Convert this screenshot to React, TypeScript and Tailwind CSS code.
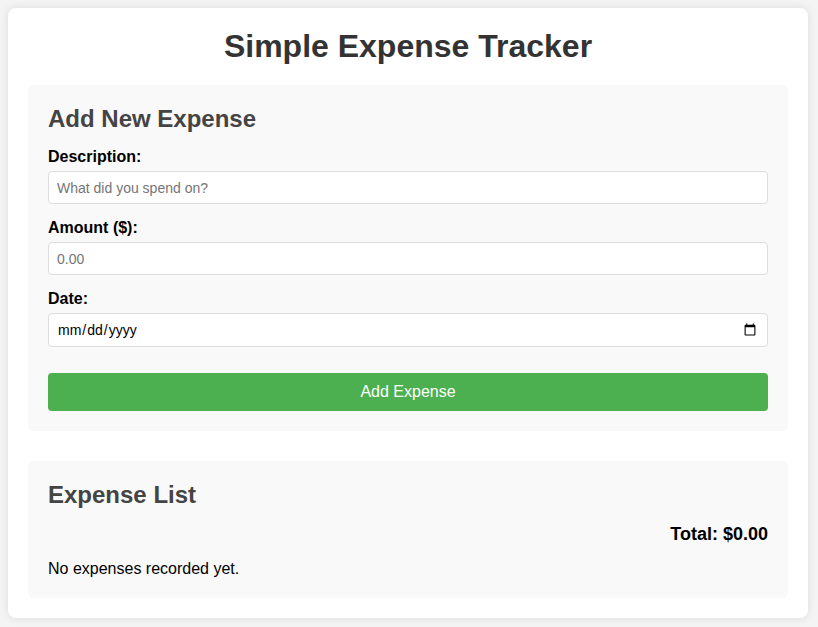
import { useState } from 'react';

const inputClass =
  'w-full rounded-[4px] border border-[#ddd] bg-white px-2 text-[14px] text-black placeholder:text-[#757575] outline-none';

const labelClass = 'mb-[5px] block text-[16px] leading-[19px] font-bold';

export default function App() {
  const [desc, setDesc] = useState('');
  const [amount, setAmount] = useState('');
  const [date, setDate] = useState('');

  return (
    <div className="min-h-[627px] bg-[#f4f4f4] py-2 pl-2 font-['Liberation_Sans',Arial,sans-serif] text-black">
      <div className="w-[800px] rounded-lg bg-white p-5 shadow-[0_0_10px_rgba(0,0,0,0.1)]">
        <h1 className="mb-5 text-center text-[32px] leading-[37px] font-bold text-[#333]">
          Simple Expense Tracker
        </h1>

        <section className="rounded-[5px] bg-[#f9f9f9] p-5">
          <h2 className="mb-[14px] text-[24px] leading-[28px] font-bold text-[#444]">
            Add New Expense
          </h2>
          <div className="mb-[14px]">
            <label className={labelClass}>Description:</label>
            <input
              className={`${inputClass} h-[33px]`}
              placeholder="What did you spend on?"
              value={desc}
              onChange={(e) => setDesc(e.target.value)}
            />
          </div>
          <div className="mb-[14px]">
            <label className={labelClass}>Amount ($):</label>
            <input
              className={`${inputClass} h-[33px]`}
              placeholder="0.00"
              type="number"
              value={amount}
              onChange={(e) => setAmount(e.target.value)}
            />
          </div>
          <div className="mb-[26px]">
            <label className={labelClass}>Date:</label>
            <input
              className={`${inputClass} h-[34px]`}
              type="date"
              value={date}
              onChange={(e) => setDate(e.target.value)}
            />
          </div>
          <button className="h-[38px] w-full rounded-[4px] bg-[#4caf50] text-[16px] text-white">
            Add Expense
          </button>
        </section>

        <section className="mt-[30px] rounded-[5px] bg-[#f9f9f9] p-5">
          <h2 className="mb-[15px] text-[24px] leading-[28px] font-bold text-[#444]">
            Expense List
          </h2>
          <div className="mb-[15px] text-right text-[18px] leading-[21px] font-bold">
            Total: $0.00
          </div>
          <p className="text-[16px] leading-[18px]">No expenses recorded yet.</p>
        </section>
      </div>
    </div>
  );
}
